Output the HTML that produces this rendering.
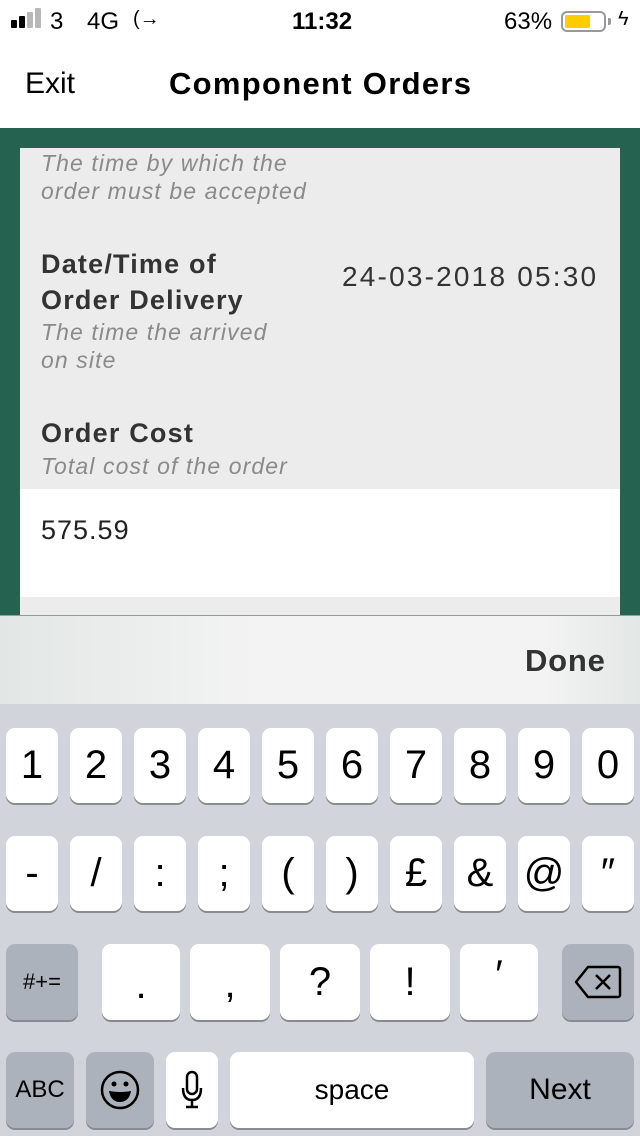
<!DOCTYPE html>
<html><head><style>
*{margin:0;padding:0;box-sizing:border-box}
body{width:640px;height:1136px;overflow:hidden;font-family:"Liberation Sans",sans-serif;background:#fff;position:relative}
.a{position:absolute;white-space:nowrap}
.k{position:absolute;background:#fff;border-radius:9px;box-shadow:0 2px 0 #888c92;display:flex;align-items:center;justify-content:center;color:#000;font-size:40px}
.g{background:#abb2bb}
.it{font-style:italic;color:#8a8a8a;font-size:23px;line-height:28px;letter-spacing:1.1px}
.lb{font-size:27px;color:#333;line-height:36px;font-weight:bold;letter-spacing:1.2px}
</style></head><body>
<!-- status -->
<div class="a" style="left:11px;top:20px;width:6px;height:8px;background:#000;border-radius:1px"></div>
<div class="a" style="left:19px;top:16px;width:6px;height:12px;background:#000;border-radius:1px"></div>
<div class="a" style="left:27px;top:12px;width:6px;height:16px;background:#b8b8b8;border-radius:1px"></div>
<div class="a" style="left:35px;top:8px;width:6px;height:20px;background:#b8b8b8;border-radius:1px"></div>
<div class="a" style="left:50px;top:8px;font-size:24px">3</div>
<div class="a" style="left:87px;top:8px;font-size:24px">4G</div>
<div class="a" style="left:133px;top:8px;font-size:20px">(→</div>
<div class="a" style="left:292px;top:8px;font-size:24px;font-weight:bold">11:32</div>
<div class="a" style="left:504px;top:8px;font-size:24px">63%</div>
<div class="a" style="left:561px;top:11px;width:45px;height:21px;border:2px solid #999;border-radius:6px"><div style="margin:2px;width:25px;height:13px;background:#fc0;border-radius:2px"></div></div>
<div class="a" style="left:608px;top:18px;width:3px;height:7px;background:#999;border-radius:0 2px 2px 0"></div>
<div class="a" style="left:618px;top:8px;font-size:20px">ϟ</div>
<!-- nav -->
<div class="a" style="left:25px;top:67px;font-size:30px">Exit</div>
<div class="a" style="left:169px;top:66px;font-size:31px;font-weight:bold;letter-spacing:1.3px">Component Orders</div>
<!-- content -->
<div class="a" style="left:0;top:128px;width:640px;height:490px;background:#256350"></div>
<div class="a" style="left:20px;top:148px;width:600px;height:470px;background:#ececec"></div>
<div class="a it" style="left:41px;top:149px">The time by which the<br>order must be accepted</div>
<div class="a lb" style="left:41px;top:246px">Date/Time of<br>Order Delivery</div>
<div class="a" style="left:342px;top:261px;font-size:28px;color:#333;letter-spacing:2.2px">24-03-2018 05:30</div>
<div class="a it" style="left:41px;top:318px">The time the arrived<br>on site</div>
<div class="a lb" style="left:41px;top:415px">Order Cost</div>
<div class="a it" style="left:41px;top:452px">Total cost of the order</div>
<div class="a" style="left:20px;top:489px;width:600px;height:108px;background:#fff"></div>
<div class="a" style="left:41px;top:515px;font-size:27px;color:#222;letter-spacing:1px">575.59</div>
<!-- done bar -->
<div class="a" style="left:0;top:615px;width:640px;height:90px;background:linear-gradient(90deg,#e2e7e5,#f3f3f3 40%,#f3f3f3 85%,#e2e7e5);border-top:1px solid #999"></div>
<div class="a" style="left:525px;top:643px;font-size:31px;font-weight:bold;color:#333;letter-spacing:0.8px">Done</div>
<!-- keyboard -->
<div class="a" style="left:0;top:704px;width:640px;height:432px;background:#d1d5db"></div>
<div class="k" style="left:6px;top:728px;width:52px;height:75px">1</div>
<div class="k" style="left:70px;top:728px;width:52px;height:75px">2</div>
<div class="k" style="left:134px;top:728px;width:52px;height:75px">3</div>
<div class="k" style="left:198px;top:728px;width:52px;height:75px">4</div>
<div class="k" style="left:262px;top:728px;width:52px;height:75px">5</div>
<div class="k" style="left:326px;top:728px;width:52px;height:75px">6</div>
<div class="k" style="left:390px;top:728px;width:52px;height:75px">7</div>
<div class="k" style="left:454px;top:728px;width:52px;height:75px">8</div>
<div class="k" style="left:518px;top:728px;width:52px;height:75px">9</div>
<div class="k" style="left:582px;top:728px;width:52px;height:75px">0</div>
<div class="k" style="left:6px;top:836px;width:52px;height:75px">-</div>
<div class="k" style="left:70px;top:836px;width:52px;height:75px">/</div>
<div class="k" style="left:134px;top:836px;width:52px;height:75px">:</div>
<div class="k" style="left:198px;top:836px;width:52px;height:75px">;</div>
<div class="k" style="left:262px;top:836px;width:52px;height:75px">(</div>
<div class="k" style="left:326px;top:836px;width:52px;height:75px">)</div>
<div class="k" style="left:390px;top:836px;width:52px;height:75px">£</div>
<div class="k" style="left:454px;top:836px;width:52px;height:75px">&amp;</div>
<div class="k" style="left:518px;top:836px;width:52px;height:75px">@</div>
<div class="k" style="left:582px;top:836px;width:52px;height:75px">″</div>
<div class="k g" style="left:6px;top:944px;width:72px;height:76px;font-size:22px">#+=</div>
<div class="k" style="left:102px;top:944px;width:78px;height:76px;padding-top:6px">.</div>
<div class="k" style="left:190px;top:944px;width:80px;height:76px;padding-top:4px">,</div>
<div class="k" style="left:280px;top:944px;width:80px;height:76px">?</div>
<div class="k" style="left:370px;top:944px;width:80px;height:76px">!</div>
<div class="k" style="left:460px;top:944px;width:78px;height:76px;padding-bottom:14px">′</div>
<div class="k g" style="left:562px;top:944px;width:72px;height:76px"><svg width="48" height="34" viewBox="0 0 48 34"><path d="M14 2H44a2 2 0 0 1 2 2V30a2 2 0 0 1-2 2H14L2 17Z" fill="none" stroke="#000" stroke-width="2.5" stroke-linejoin="round"/><path d="M22 10L36 24M36 10L22 24" stroke="#000" stroke-width="2.5"/></svg></div>
<div class="k g" style="left:6px;top:1052px;width:68px;height:76px;font-size:24px">ABC</div>
<div class="k g" style="left:86px;top:1052px;width:68px;height:76px"><svg width="42" height="42" viewBox="0 0 42 42"><circle cx="21" cy="21" r="18" fill="none" stroke="#000" stroke-width="2.5"/><circle cx="15" cy="15" r="2.5"/><circle cx="27" cy="15" r="2.5"/><path d="M10 22Q21 24 32 22Q30 33 21 33Q12 33 10 22Z"/></svg></div>
<div class="k" style="left:166px;top:1052px;width:52px;height:76px"><svg width="22" height="40" viewBox="0 0 22 40"><rect x="6" y="2" width="10" height="22" rx="5" fill="none" stroke="#000" stroke-width="2.5"/><path d="M2 18Q2 30 11 30Q20 30 20 18M11 30V37M5 37H17" fill="none" stroke="#000" stroke-width="2.5"/></svg></div>
<div class="k" style="left:230px;top:1052px;width:244px;height:76px;font-size:28px">space</div>
<div class="k g" style="left:486px;top:1052px;width:148px;height:76px;font-size:30px">Next</div>
</body></html>
